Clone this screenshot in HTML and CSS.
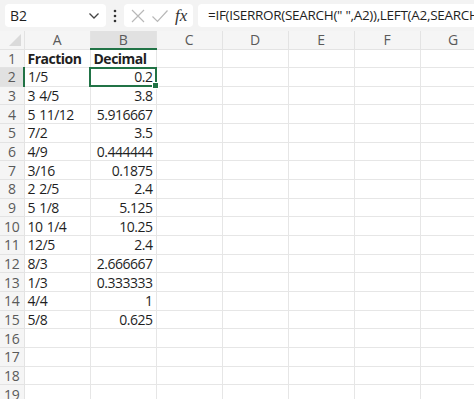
FILE: index.html
```html
<!DOCTYPE HTML>
<html lang='en'>
<head>
<meta charset='utf-8'>
<title>Fraction to Decimal</title>
<link rel="stylesheet" href="styles.css">
</head>
<body>
<!--formula bar starts here-->
<div class='formula_bar'>
<div class='name_box'>
<span>B2</span>
<svg class='chevron' width='12' height='8' viewBox='0 0 12 8'><path d='M1.5 1.5 L6 6 L10.5 1.5' fill='none' stroke='#444' stroke-width='1.3'/></svg>
</div>
<div class='dots'>
<svg width='4' height='14' viewBox='0 0 4 14'><circle cx='2' cy='2' r='1.3' fill='#333'/><circle cx='2' cy='7' r='1.3' fill='#333'/><circle cx='2' cy='12' r='1.3' fill='#333'/></svg>
</div>
<div class='icon_box'>
<svg width='16' height='16' viewBox='0 0 16 16'><path d='M2 2 L14 14 M14 2 L2 14' stroke='#b8b8b8' stroke-width='1.2'/></svg>
<svg width='18' height='16' viewBox='0 0 18 16'><path d='M1.5 8.5 L6.5 13.5 L16.5 2.5' fill='none' stroke='#b8b8b8' stroke-width='1.2'/></svg>
<span class='fx'>fx</span>
</div>
<div class='formula_input'>=IF(ISERROR(SEARCH(" ",A2)),LEFT(A2,SEARCH(" ",A2)-1)+0,0)</div>
</div>
<!--formula bar ends here-->
<!--sheet starts here-->
<table class='sheet'>
<colgroup>
<col class='rowhead_col'>
<col class='cell_col'><col class='cell_col'><col class='cell_col'><col class='cell_col'><col class='cell_col'><col class='cell_col'><col class='cell_col'>
</colgroup>
<tr class='colhead'>
<th class='corner'><div class='triangle'></div></th>
<th>A</th><th class='active'>B</th><th>C</th><th>D</th><th>E</th><th>F</th><th>G</th>
</tr>
<tr><th>1</th><td class='bold'>Fraction</td><td class='bold'>Decimal</td><td></td><td></td><td></td><td></td><td></td></tr>
<tr><th class='active'>2</th><td>1/5</td><td class='num selected'>0.2<div class='handle'></div></td><td></td><td></td><td></td><td></td><td></td></tr>
<tr><th>3</th><td>3 4/5</td><td class='num'>3.8</td><td></td><td></td><td></td><td></td><td></td></tr>
<tr><th>4</th><td>5 11/12</td><td class='num'>5.916667</td><td></td><td></td><td></td><td></td><td></td></tr>
<tr><th>5</th><td>7/2</td><td class='num'>3.5</td><td></td><td></td><td></td><td></td><td></td></tr>
<tr><th>6</th><td>4/9</td><td class='num'>0.444444</td><td></td><td></td><td></td><td></td><td></td></tr>
<tr><th>7</th><td>3/16</td><td class='num'>0.1875</td><td></td><td></td><td></td><td></td><td></td></tr>
<tr><th>8</th><td>2 2/5</td><td class='num'>2.4</td><td></td><td></td><td></td><td></td><td></td></tr>
<tr><th>9</th><td>5 1/8</td><td class='num'>5.125</td><td></td><td></td><td></td><td></td><td></td></tr>
<tr><th>10</th><td>10 1/4</td><td class='num'>10.25</td><td></td><td></td><td></td><td></td><td></td></tr>
<tr><th>11</th><td>12/5</td><td class='num'>2.4</td><td></td><td></td><td></td><td></td><td></td></tr>
<tr><th>12</th><td>8/3</td><td class='num'>2.666667</td><td></td><td></td><td></td><td></td><td></td></tr>
<tr><th>13</th><td>1/3</td><td class='num'>0.333333</td><td></td><td></td><td></td><td></td><td></td></tr>
<tr><th>14</th><td>4/4</td><td class='num'>1</td><td></td><td></td><td></td><td></td><td></td></tr>
<tr><th>15</th><td>5/8</td><td class='num'>0.625</td><td></td><td></td><td></td><td></td><td></td></tr>
<tr><th>16</th><td></td><td></td><td></td><td></td><td></td><td></td><td></td></tr>
<tr><th>17</th><td></td><td></td><td></td><td></td><td></td><td></td><td></td></tr>
<tr><th>18</th><td></td><td></td><td></td><td></td><td></td><td></td><td></td></tr>
<tr><th>19</th><td></td><td></td><td></td><td></td><td></td><td></td><td></td></tr>
</table>
<!--sheet ends here-->
</body>
</html>
```
FILE: styles.css
```css
body
{
margin:0;
width:474px;
height:399px;
overflow:hidden;
background:#ffffff;
font-family:"Open Sans","Noto Sans",sans-serif;
color:#1f1f1f;
}
.formula_bar
{
height:31px;
background:#f3f3f3;
display:flex;
align-items:center;
padding-left:5px;
box-sizing:border-box;
white-space:nowrap;
overflow:hidden;
}
.name_box
{
width:101px;
height:23px;
background:#ffffff;
border-radius:4px;
display:flex;
align-items:center;
justify-content:space-between;
padding:0 6px 0 5px;
box-sizing:border-box;
font-size:14px;
}
.dots
{
width:18px;
display:flex;
justify-content:center;
align-items:center;
}
.icon_box
{
width:69px;
height:23px;
background:#ffffff;
border-radius:4px;
display:flex;
align-items:center;
justify-content:space-around;
padding:0 3px;
box-sizing:border-box;
}
.fx
{
font-family:"Liberation Serif",serif;
font-style:italic;
font-size:17px;
color:#333;
}
.formula_input
{
flex:1;
margin-left:5px;
height:23px;
line-height:23px;
background:#ffffff;
border-radius:4px 0 0 4px;
padding-left:10px;
font-size:13.5px;
letter-spacing:-0.3px;
overflow:hidden;
}
.sheet
{
border-collapse:collapse;
table-layout:fixed;
width:486px;
font-size:14px;
}
.rowhead_col
{
width:24px;
}
.cell_col
{
width:66px;
}
.sheet tr
{
height:18.67px;
}
.sheet tr.colhead
{
height:18px;
}
.sheet th
{
background:#f5f5f5;
color:#5a5a5a;
font-weight:normal;
font-size:14px;
padding:0;
border-right:1px solid #e3e3e3;
border-bottom:1px solid #e3e3e3;
text-align:center;
line-height:17px;
letter-spacing:-0.3px;
}
.sheet th.active
{
background:#e1e1e1;
}
.colhead th.active
{
border-bottom:2px solid #217346;
}
tr th.active:first-child
{
border-right:2px solid #217346;
}
.corner
{
position:relative;
}
.triangle
{
position:absolute;
right:3px;
bottom:3px;
width:0;
height:0;
border-left:12px solid transparent;
border-bottom:12px solid #dadada;
}
.sheet td
{
padding:0 3px;
border-right:1px solid #e6e6e6;
border-bottom:1px solid #e6e6e6;
line-height:17px;
white-space:nowrap;
overflow:hidden;
letter-spacing:-0.5px;
word-spacing:1px;
}
.bold
{
font-weight:bold;
letter-spacing:-0.7px;
}
.num
{
text-align:right;
}
.sheet td.selected
{
position:relative;
overflow:visible;
outline:2px solid #217346;
outline-offset:-1px;
}
.handle
{
position:absolute;
right:-3px;
bottom:-3px;
width:5px;
height:5px;
background:#217346;
border:1px solid #ffffff;
}
```
